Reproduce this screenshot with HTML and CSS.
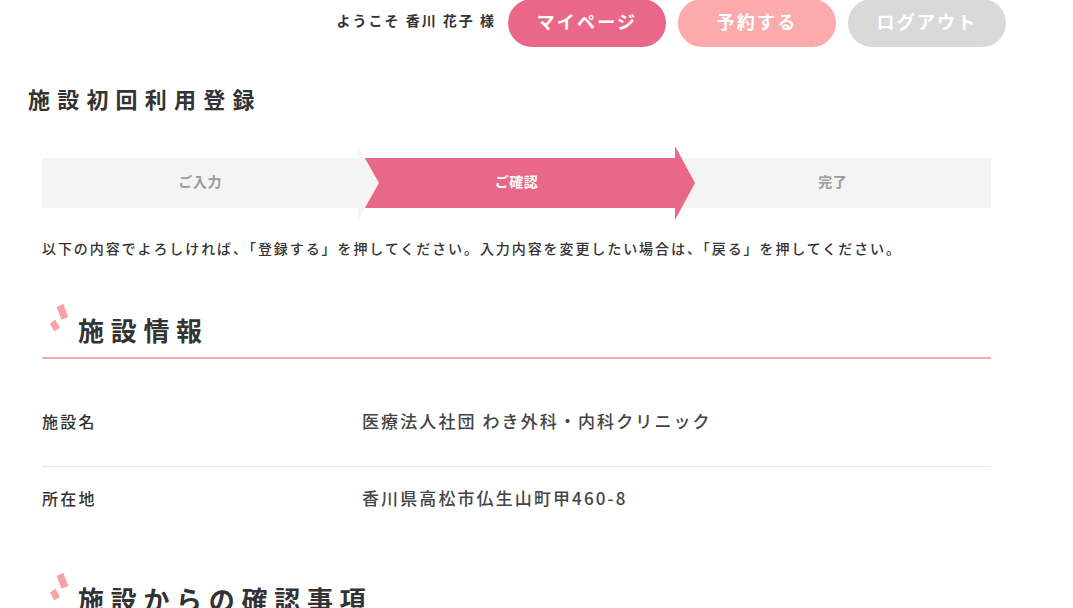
FILE: index.html
```html
<!DOCTYPE html>
<html lang="ja">
<head>
<meta charset="utf-8">
<title>施設初回利用登録</title>
<link rel="stylesheet" href="styles.css">
</head>
<body>
<header class="site-header">
  <span class="greeting">ようこそ 香川 花子 様</span>
  <a class="hbtn hbtn-mypage" href="#">マイページ</a>
  <a class="hbtn hbtn-reserve" href="#">予約する</a>
  <a class="hbtn hbtn-logout" href="#">ログアウト</a>
</header>

<h1 class="page-title">施設初回利用登録</h1>

<main class="content">
  <ol class="steps">
    <li class="step step-done">ご入力</li>
    <li class="step step-current">ご確認</li>
    <li class="step">完了</li>
  </ol>

  <p class="intro">以下の内容でよろしければ、「登録する」を押してください。入力内容を変更したい場合は、「戻る」を押してください。</p>

  <section class="section">
    <h2 class="section-title">
      <svg class="deco" width="24" height="32" viewBox="0 0 24 32" aria-hidden="true">
        <polygon points="8.7,5 15.3,1.7 20.3,15 13.5,17.8" fill="#f8a1a8"/>
        <polygon points="2,21.7 7.2,17.7 12,25.7 6.3,29.5" fill="#f8a1a8"/>
      </svg>
      <span>施設情報</span>
    </h2>
    <dl class="info">
      <div class="info-row">
        <dt>施設名</dt>
        <dd>医療法人社団 わき外科・内科クリニック</dd>
      </div>
      <div class="info-row">
        <dt>所在地</dt>
        <dd>香川県高松市仏生山町甲460-8</dd>
      </div>
    </dl>
  </section>

  <section class="section section-2">
    <h2 class="section-title">
      <svg class="deco" width="24" height="32" viewBox="0 0 24 32" aria-hidden="true">
        <polygon points="8.7,5 15.3,1.7 20.3,15 13.5,17.8" fill="#f8a1a8"/>
        <polygon points="2,21.7 7.2,17.7 12,25.7 6.3,29.5" fill="#f8a1a8"/>
      </svg>
      <span>施設からの確認事項</span>
    </h2>
  </section>
</main>
</body>
</html>
```

FILE: styles.css
```css
* { box-sizing: border-box; }

html, body {
  margin: 0;
  padding: 0;
  background: #fff;
}

body {
  font-family: "Noto Sans CJK JP", "Noto Sans", sans-serif;
  color: #333;
  overflow: hidden;
}

.site-header {
  display: flex;
  justify-content: flex-end;
  align-items: center;
  height: 46px;
  padding-right: 67px;
  gap: 12px;
}

.greeting {
  font-size: 14px;
  font-weight: 700;
  letter-spacing: 2px;
  color: #333;
  margin-bottom: 6px;
}

.hbtn {
  display: flex;
  align-items: center;
  justify-content: center;
  width: 158px;
  height: 48px;
  flex: none;
  padding-bottom: 4px;
  border-radius: 24px;
  color: #fff;
  font-size: 18px;
  font-weight: 700;
  letter-spacing: 2.2px;
  text-decoration: none;
}

.hbtn-mypage { background: #e96889; }
.hbtn-reserve { background: #fdaaad; }
.hbtn-logout { background: #d9d9d9; }

.page-title {
  margin: 41px 0 0 28px;
  font-size: 22px;
  line-height: 22px;
  font-weight: 700;
  letter-spacing: 7.2px;
  color: #333;
}

.content {
  margin: 0 82px 0 42px;
}

.steps {
  list-style: none;
  margin: 49px 0 0;
  padding: 0;
  display: flex;
  height: 50px;
}

.step {
  flex: 1;
  position: relative;
  display: flex;
  align-items: center;
  justify-content: center;
  padding-bottom: 4px;
  background: #f4f4f4;
  color: #9a9a9a;
  font-size: 14px;
  font-weight: 700;
  letter-spacing: 0.04em;
}

.step-done::after,
.step-current::after {
  content: "";
  position: absolute;
  left: 100%;
  top: -12px;
  width: 0;
  height: 0;
  border-top: 37px solid transparent;
  border-bottom: 37px solid transparent;
  border-left: 21px solid #f4f4f4;
  z-index: 2;
}

.step-done::after {
  border-left-color: #f5f5f5;
}

.step-current {
  background: #e96889;
  color: #fff;
  z-index: 1;
}

.step-current::after {
  border-left-color: #e96889;
  border-left-width: 20px;
}

.intro {
  margin: 30px 0 0;
  font-size: 14px;
  line-height: 20px;
  font-weight: 500;
  letter-spacing: 1.92px;
  color: #333;
}

.section-title {
  display: flex;
  align-items: flex-start;
  margin: 0;
  padding: 0 0 10px 6px;
  font-size: 26px;
  line-height: 34px;
  font-weight: 700;
  letter-spacing: 6.7px;
  color: #333;
}

.section {
  margin-top: 55px;
}

.section:first-of-type .section-title {
  border-bottom: 2px solid #f5a9ad;
}

.deco {
  flex: none;
  margin: -11px 6px 0 0;
}

.section-2 {
  margin-top: 39px;
}

.info {
  margin: 32px 0 0;
}

.info-row {
  display: flex;
  padding: 19px 0 34px;
  border-bottom: 1px solid #e6e6e6;
}

.info-row:last-child {
  border-bottom: none;
  padding-top: 20px;
}

.info dt {
  width: 320px;
  flex: none;
  font-size: 16px;
  line-height: 22px;
  font-weight: 500;
  letter-spacing: 2.3px;
  color: #333;
}

.info dd {
  margin: 0;
  font-size: 17px;
  line-height: 22px;
  font-weight: 500;
  letter-spacing: 2.1px;
  color: #444;
}
```
